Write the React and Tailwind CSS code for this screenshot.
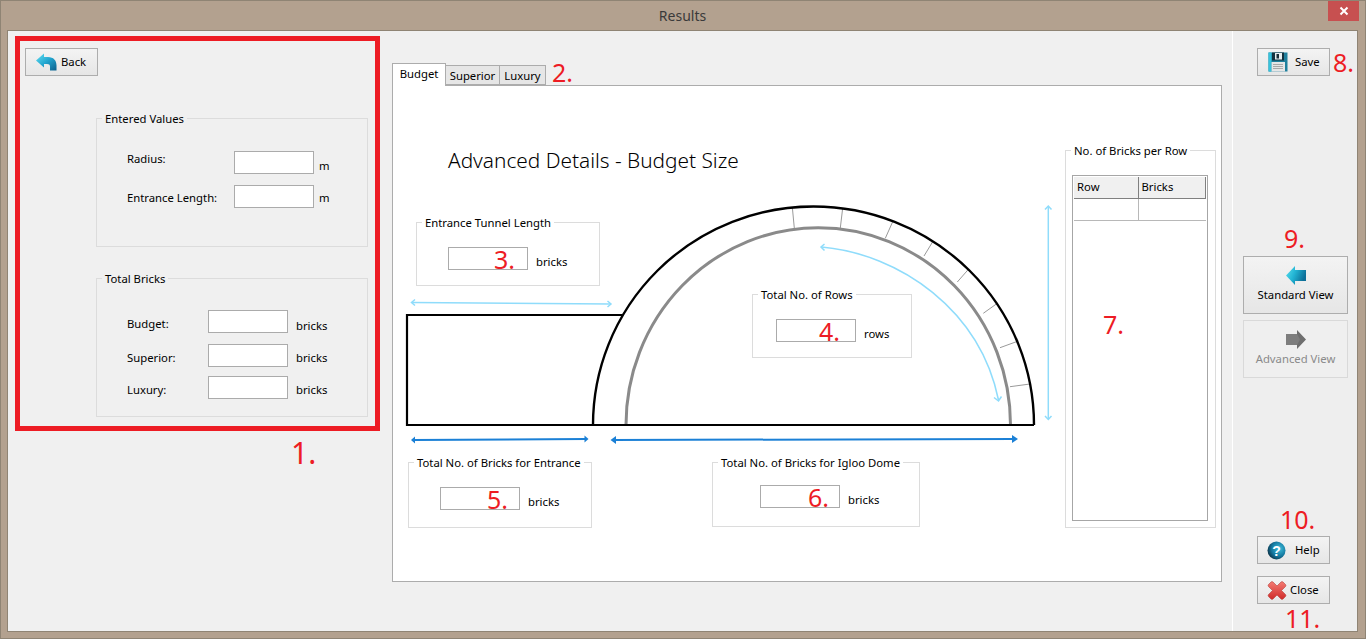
import React from 'react';

const btn = 'flex items-center border border-[#adadad] bg-linear-to-b from-[#f3f3f3] to-[#e6e6e6] text-black';

function BackIcon() {
  return (
    <svg width="21" height="18" viewBox="0 0 21 18">
      <defs>
        <linearGradient id="backFill" x1="0" y1="0" x2="1" y2="1">
          <stop offset="0" stopColor="#63e0f2" />
          <stop offset="0.5" stopColor="#22a5cf" />
          <stop offset="1" stopColor="#0b5f8c" />
        </linearGradient>
      </defs>
      <path d="M0 7.5 L8 0.5 V4 H12 C17.5 4 20.5 7.5 20.5 12.5 V17.5 H14 V13.5 C14 11.8 13 11 11 11 H8 V14.5 Z" fill="url(#backFill)" />
    </svg>
  );
}

function SaveIcon() {
  return (
    <svg width="20" height="20" viewBox="0 0 20 20">
      <rect x="0.5" y="0.5" width="19" height="19" fill="#1f7f9c" />
      <rect x="0.5" y="0.5" width="3" height="19" fill="#37c3dc" />
      <rect x="4" y="0.5" width="12" height="8" fill="#14323f" />
      <rect x="7" y="1" width="7" height="6.5" fill="#e8eef0" />
      <rect x="8.5" y="2" width="2.5" height="4.5" fill="#1a2e38" />
      <rect x="3.5" y="10" width="13.5" height="9.5" fill="#e6e6e6" />
      <path d="M5 12.5H15M5 14.5H15M5 16.5H15" stroke="#a9a9a9" strokeWidth="1" />
    </svg>
  );
}

function LeftArrow() {
  return (
    <svg width="20" height="19" viewBox="0 0 20 19">
      <defs>
        <linearGradient id="leftFill" x1="0" y1="0" x2="1" y2="0.4">
          <stop offset="0" stopColor="#5fe0ee" />
          <stop offset="0.5" stopColor="#22b4d4" />
          <stop offset="1" stopColor="#0c6f98" />
        </linearGradient>
      </defs>
      <path d="M0 9.5 L9 0 V4 H20 V15 H9 V19 Z" fill="url(#leftFill)" />
    </svg>
  );
}

function RightArrow() {
  return (
    <svg width="20" height="19" viewBox="0 0 20 19">
      <path d="M20 9.5 L11 0 V4 H0 V15 H11 V19 Z" fill="#6e6e6e" />
      <path d="M0 4 H11 L14 9.5 L11 15 H0 Z" fill="#7d7d7d" />
    </svg>
  );
}

function HelpIcon() {
  return (
    <svg width="19" height="19" viewBox="0 0 19 19">
      <defs>
        <radialGradient id="helpFill" cx="0.65" cy="0.4" r="0.7">
          <stop offset="0" stopColor="#3fc0dd" />
          <stop offset="0.6" stopColor="#14789f" />
          <stop offset="1" stopColor="#0c2f42" />
        </radialGradient>
      </defs>
      <circle cx="9.5" cy="9.5" r="9" fill="url(#helpFill)" />
      <text x="9.5" y="14.5" textAnchor="middle" fontSize="14" fontWeight="700" fontFamily="'Liberation Sans', sans-serif" fill="#fff">?</text>
    </svg>
  );
}

function CloseIcon() {
  return (
    <svg width="20" height="19" viewBox="0 0 20 19">
      <defs>
        <linearGradient id="closeFill" x1="0" y1="0" x2="0" y2="1">
          <stop offset="0" stopColor="#f47a72" />
          <stop offset="1" stopColor="#cf2c2a" />
        </linearGradient>
      </defs>
      <path d="M1.5 3.5 L4 1 Q5 0.2 6 1 L10 5 L14 1 Q15 0.2 16 1 L18.5 3.5 Q19.3 4.5 18.5 5.5 L14.5 9.5 L18.5 13.5 Q19.3 14.5 18.5 15.5 L16 18 Q15 18.8 14 18 L10 14 L6 18 Q5 18.8 4 18 L1.5 15.5 Q0.7 14.5 1.5 13.5 L5.5 9.5 L1.5 5.5 Q0.7 4.5 1.5 3.5 Z" fill="url(#closeFill)" stroke="#b5403c" strokeWidth="0.6" />
    </svg>
  );
}

// the hand-drawn igloo, coordinates are the window's own pixels
function Igloo() {
  const ticks = [
    [792.3, 207, 794.3, 228],
    [842.7, 208, 840.3, 228],
    [892.7, 221.7, 885.3, 238.3],
    [932.7, 241.7, 924, 256],
    [968.7, 269, 957.3, 282],
    [997.3, 303.3, 983.3, 313.3],
    [1018.3, 341, 1000, 347.7],
    [1030, 384, 1010, 386.7],
  ];
  return (
    <svg className="absolute inset-0" width="828" height="495" viewBox="393 86 828 495" fill="none">
      {ticks.map((t, i) => (
        <line key={i} x1={t[0]} y1={t[1]} x2={t[2]} y2={t[3]} stroke="#9a9a9a" strokeWidth="1" />
      ))}
      <path d="M626 425 A192 197 0 0 1 1010.5 425" stroke="#8a8a8a" strokeWidth="3" />
      <path d="M593 425 A220.5 218.5 0 0 1 1034 425" stroke="#000" strokeWidth="2.4" />
      <path d="M622 315 H407 V425 H1034" stroke="#000" strokeWidth="2.2" />

      <g stroke="#8fdcfb" strokeWidth="1.5">
        <path d="M412 302.5 L611 304" />
        <path d="M415 299.5 L411.5 302.5 L415 305.5 M607.5 301 L611 304 L607.5 307" />
        <path d="M1048.3 207 V419" />
        <path d="M1045 209.5 L1048.3 206 L1051.5 209.5 M1045 416 L1048.3 419.5 L1051.5 416" />
        <path d="M821.5 247 C900 254 980 310 998.5 400" />
        <path d="M824.5 244 L821 247 L824.5 250.5 M994 397.5 L998.5 401 L1001.5 396.5" />
      </g>
      <g stroke="#1b80d6" strokeWidth="2">
        <path d="M413 440 L587 439" />
        <path d="M612 440 L1014 439" />
      </g>
      <g fill="#1b80d6">
        <path d="M411 440 L415 436.5 V443.5 Z" />
        <path d="M588.5 439 L584.5 435.5 V442.5 Z" />
        <path d="M610.5 440 L616 436 V444 Z" />
        <path d="M1018 439 L1012 435 V443 Z" />
      </g>
    </svg>
  );
}

function Group({ title, className, children }) {
  return (
    <fieldset className={`border border-[#dcdcdc] ${className}`}>
      <legend className="ml-[5px] px-[3px] h-[16px] leading-[18px] whitespace-nowrap">{title}</legend>
      {children}
    </fieldset>
  );
}

function Red({ className = '', children }) {
  return <span className={`text-[25px] leading-[28px] text-[#ed1c24] ${className}`}>{children}</span>;
}

function ValueBox({ children, className = '' }) {
  return (
    <div className={`w-[80px] h-[23px] shrink-0 border border-[#ababab] bg-white text-right ${className}`}>
      {children && <Red className="block -mt-[3px]">{children}</Red>}
    </div>
  );
}

function Row({ label, labelClass, labelWidth, unit, unitClass, className = '' }) {
  return (
    <div className={`flex h-[23px] pl-[30px] ${className}`}>
      <span className={`${labelWidth} ${labelClass}`}>{label}</span>
      <ValueBox />
      <span className={`${unitClass}`}>{unit}</span>
    </div>
  );
}

function DiagramField({ title, className, rowClass, boxClass, value, unit }) {
  return (
    <Group title={title} className={`absolute ${className}`}>
      <div className={`flex ${rowClass}`}>
        <ValueBox className={boxClass}>{value}</ValueBox>
        <span className="ml-[8px] mt-[7px]">{unit}</span>
      </div>
    </Group>
  );
}

export default function App() {
  return (
    <div
      className="relative w-[1366px] h-[639px] overflow-hidden border border-[#8f8474] bg-[#b3a18f] pl-[6px] pr-[7px] text-[11.3px] text-black"
      style={{ fontFamily: "'Noto Sans', sans-serif" }}
    >
      <div className="h-[29px] flex items-center justify-center text-[14px] text-[#3a3a3a]">Results</div>
      <div className="absolute right-[6px] -top-px w-[31px] h-[21px] flex items-center justify-center bg-[#c75050]">
        <svg width="10" height="10" viewBox="0 0 10 10">
          <path d="M1.5 1.5 L8.5 8.5 M8.5 1.5 L1.5 8.5" stroke="#fff" strokeWidth="2" />
        </svg>
      </div>

      <div className="flex h-[602px] border border-[#8f8474] bg-[#f0f0f0]">
        {/* left column */}
        <div className="w-[384px] shrink-0">
          <div className="ml-[7px] mt-[5px] w-[365px] h-[395px] border-[5px] border-[#ed1c24]">
            <button className={`${btn} ml-[5px] mt-[7px] w-[73px] h-[28px] pl-[10px]`}>
              <BackIcon />
              <span className="ml-[4px] mt-[1px]">Back</span>
            </button>
            <Group title="Entered Values" className="ml-[76px] mt-[34px] w-[272px] h-[137px]">
              <Row className="mt-[25px]" label="Radius:" labelWidth="w-[107px]" labelClass="" unit="m" unitClass="ml-[5px] mt-[7px]" />
              <Row className="mt-[11px]" label="Entrance Length:" labelWidth="w-[107px]" labelClass="mt-[5px]" unit="m" unitClass="ml-[5px] mt-[5px]" />
            </Group>
            <Group title="Total Bricks" className="ml-[76px] mt-[23px] w-[272px] h-[147px]">
              <Row className="mt-[24px]" label="Budget:" labelWidth="w-[81px]" labelClass="mt-[6px]" unit="bricks" unitClass="ml-[8px] mt-[8px]" />
              <Row className="mt-[11px]" label="Superior:" labelWidth="w-[81px]" labelClass="mt-[6px]" unit="bricks" unitClass="ml-[8px] mt-[6px]" />
              <Row className="mt-[9px]" label="Luxury:" labelWidth="w-[81px]" labelClass="mt-[6px]" unit="bricks" unitClass="ml-[8px] mt-[6px]" />
            </Group>
          </div>
          <div className="ml-[283px] mt-[7px] text-[30px] leading-[30px] text-[#ed1c24]">1.</div>
        </div>

        {/* middle column */}
        <div className="w-[830px] shrink-0 pt-[32px]">
          <div className="flex items-end h-[22px]">
            <div className="relative z-10 w-[54px] h-[23px] -mb-px border border-b-0 border-[#acacac] bg-white text-center leading-[19px]">Budget</div>
            <div className="w-[54px] h-[20px] border-y border-r border-[#acacac] bg-[#e6e6e6] text-center leading-[20px]">Superior</div>
            <div className="w-[46px] h-[20px] border-y border-r border-[#acacac] bg-[#e6e6e6] text-center leading-[20px]">Luxury</div>
            <Red className="ml-[6px] -mb-[1px]">2.</Red>
          </div>
          <div className="relative h-[497px] border border-[#acacac] bg-white">
            <Igloo />
            <h1 className="absolute left-[55px] top-[60px] text-[20.8px] leading-[28px] font-light">Advanced Details - Budget Size</h1>

            <DiagramField title="Entrance Tunnel Length" className="left-[23px] top-[128px] w-[184px] h-[72px]" rowClass="pl-[31px] mt-[17px]" boxClass="pr-[12px]" value="3." unit="bricks" />
            <DiagramField title="Total No. of Rows" className="left-[359px] top-[200px] w-[160px] h-[72px]" rowClass="pl-[23px] mt-[17px]" boxClass="pr-[15px]" value="4." unit="rows" />
            <DiagramField title="Total No. of Bricks for Entrance" className="left-[15px] top-[368px] w-[184px] h-[74px]" rowClass="pl-[31px] mt-[17px]" boxClass="pr-[11px]" value="5." unit="bricks" />
            <DiagramField title="Total No. of Bricks for Igloo Dome" className="left-[319px] top-[368px] w-[208px] h-[73px]" rowClass="pl-[47px] mt-[15px]" boxClass="pr-[10px]" value="6." unit="bricks" />

            <Red className="absolute left-[710px] top-[224px]">7.</Red>

            <Group title="No. of Bricks per Row" className="absolute left-[672px] top-[56px] w-[151px] h-[386px]">
              <div className="ml-[6px] mt-[17px] w-[136px] h-[346px] border border-[#a6a6a6] p-px">
                <table className="w-[132px] table-fixed border-collapse">
                  <thead>
                    <tr className="h-[21px] bg-[#f0f0f0] border-b border-[#808080]">
                      <th className="w-[64px] border-r border-[#808080] pl-[3px] text-left font-normal">Row</th>
                      <th className="border-r border-[#808080] pl-[3px] text-left font-normal">Bricks</th>
                    </tr>
                  </thead>
                  <tbody>
                    <tr className="h-[22px] border-b border-[#b8b8b8]">
                      <td className="border-r border-[#b8b8b8]"></td>
                      <td></td>
                    </tr>
                  </tbody>
                </table>
              </div>
            </Group>
          </div>
        </div>

        {/* right column */}
        <div className="ml-[10px] w-[125px] shrink-0 border-l border-white bg-[#eeeeee] flex flex-col">
          <div className="flex items-center ml-[24px] mt-[17px]">
            <button className={`${btn} w-[73px] h-[28px] pl-[10px]`}>
              <SaveIcon />
              <span className="ml-[7px]">Save</span>
            </button>
            <Red className="ml-[3px]">8.</Red>
          </div>
          <Red className="block mt-[148px] ml-[51px]">9.</Red>
          <button className={`${btn} flex-col ml-[10px] mt-[4px] w-[105px] h-[58px] pt-[9px]`}>
            <LeftArrow />
            <span className="mt-[2px]">Standard View</span>
          </button>
          <button className="flex flex-col items-center ml-[10px] mt-[6px] w-[105px] h-[58px] pt-[9px] border border-[#d9d9d9] bg-[#efefef] text-[#8a8a8a]">
            <RightArrow />
            <span className="mt-[2px]">Advanced View</span>
          </button>
          <Red className="block mt-[127px] ml-[47px]">10.</Red>
          <button className={`${btn} ml-[24px] mt-[3px] w-[73px] h-[28px] pl-[9px]`}>
            <HelpIcon />
            <span className="ml-[9px]">Help</span>
          </button>
          <button className={`${btn} ml-[24px] mt-[12px] w-[73px] h-[28px] pl-[9px]`}>
            <CloseIcon />
            <span className="ml-[3px]">Close</span>
          </button>
          <Red className="block ml-[52px] h-[27px]">11.</Red>
        </div>
      </div>
    </div>
  );
}
